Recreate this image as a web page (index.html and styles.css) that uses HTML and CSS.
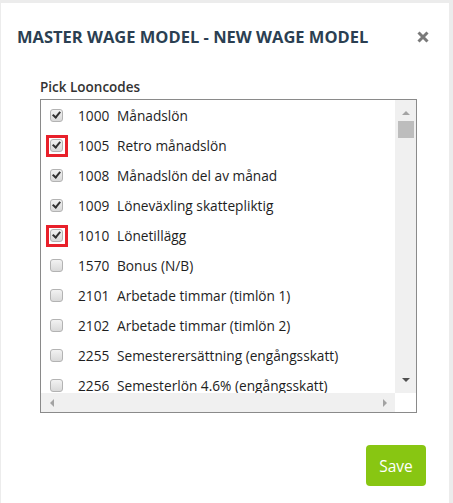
FILE: index.html
```html
<!DOCTYPE html>
<html lang="sv">
<head>
    <meta charset="UTF-8">
    <meta name="viewport" content="width=device-width, initial-scale=1.0">
    <title>Master wage model</title>
    <link rel="stylesheet" href="styles.css">
</head>
<body>
    <div class="modal">
        <div class="modal-header">
            <h1>MASTER WAGE MODEL - NEW WAGE MODEL</h1>
            <span class="close">
                <svg width="12" height="12" viewBox="0 0 12 12"><path d="M1.5 1.5 L10.5 10.5 M10.5 1.5 L1.5 10.5" stroke="#7a7a7a" stroke-width="3"/></svg>
            </span>
        </div>

        <div class="modal-body">
            <div class="field-label">Pick Looncodes</div>
            <div class="listbox">
                <div class="list">
                    <div class="row"><span class="check on"></span><span class="code">1000</span><span class="name">Månadslön</span></div>
                    <div class="row"><span class="mark"><span class="check on"></span></span><span class="code">1005</span><span class="name">Retro månadslön</span></div>
                    <div class="row"><span class="check on"></span><span class="code">1008</span><span class="name">Månadslön del av månad</span></div>
                    <div class="row"><span class="check on"></span><span class="code">1009</span><span class="name">Löneväxling skattepliktig</span></div>
                    <div class="row"><span class="mark"><span class="check on"></span></span><span class="code">1010</span><span class="name">Lönetillägg</span></div>
                    <div class="row"><span class="check"></span><span class="code">1570</span><span class="name">Bonus (N/B)</span></div>
                    <div class="row"><span class="check"></span><span class="code">2101</span><span class="name">Arbetade timmar (timlön 1)</span></div>
                    <div class="row"><span class="check"></span><span class="code">2102</span><span class="name">Arbetade timmar (timlön 2)</span></div>
                    <div class="row"><span class="check"></span><span class="code">2255</span><span class="name">Semesterersättning (engångsskatt)</span></div>
                    <div class="row"><span class="check"></span><span class="code">2256</span><span class="name">Semesterlön 4.6% (engångsskatt)</span></div>
                </div>
                <div class="vbar">
                    <span class="arrow up"></span>
                    <span class="thumb"></span>
                    <span class="spacer"></span>
                    <span class="arrow down"></span>
                </div>
                <div class="hbar">
                    <span class="arrow left"></span>
                    <span class="arrow right"></span>
                </div>
                <div class="corner"></div>
            </div>
        </div>

        <div class="modal-footer">
            <button type="button" class="btn-save">Save</button>
        </div>
    </div>
</body>
</html>
```

FILE: styles.css
```css
body {
    margin: 0;
    height: 503px;
    overflow: hidden;
    background: #ececec;
    font-family: "Open Sans", "Liberation Sans", sans-serif;
}

.modal {
    box-sizing: border-box;
    width: 448px;
    height: 500px;
    margin: 3px 0 0 1px;
    background: #fff;
    display: flex;
    flex-direction: column;
}

.modal-header {
    display: flex;
    align-items: center;
    justify-content: space-between;
    padding: 20px 20px 0 16px;
    height: 26px;
}

h1 {
    margin: 0;
    font-size: 16.5px;
    font-weight: 700;
    color: #2b3f52;
}

.close {
    display: flex;
    margin-top: 2px;
}

.modal-body {
    padding: 29px 0 0 39px;
}

.field-label {
    font-size: 13.5px;
    font-weight: 600;
    color: #333;
    line-height: 18px;
    margin-bottom: 3px;
}

.listbox {
    box-sizing: border-box;
    width: 377px;
    height: 314px;
    border: 1px solid #8a8a8a;
    display: grid;
    grid-template-columns: 1fr 21px;
    grid-template-rows: 1fr 19px;
}

.list {
    overflow: hidden;
    padding-left: 9px;
}

.row {
    display: flex;
    align-items: center;
    height: 30px;
    font-size: 13.7px;
    color: #1e1e1e;
    white-space: nowrap;
}

.check {
    box-sizing: border-box;
    width: 13px;
    height: 13px;
    flex: none;
    border: 1px solid #b3b3b3;
    border-radius: 3px;
    background: linear-gradient(#f2f2f2, #d9d9d9);
    margin-right: 15px;
    position: relative;
}

.check.on::after {
    content: "";
    position: absolute;
    left: 3px;
    top: 0px;
    width: 3px;
    height: 6px;
    border: solid #333;
    border-width: 0 2px 2px 0;
    transform: rotate(40deg);
}

/* red highlight round a checkbox */
.mark {
    display: flex;
    flex: none;
    border: 3px solid #e8202a;
    padding: 1px 2px 2px 1px;
    margin: -4px 10px -5px -4px;
}

.mark .check {
    margin-right: 0;
}

.code {
    width: 39px;
    flex: none;
}

.vbar {
    background: #f0f0f0;
    display: flex;
    flex-direction: column;
    align-items: center;
}

.thumb {
    width: 16px;
    height: 17px;
    background: #bdbdbd;
    margin-top: 6px;
}

.spacer {
    flex: 1;
}

.hbar {
    background: #f0f0f0;
    display: flex;
    align-items: center;
    justify-content: space-between;
    padding: 0 8px 0 9px;
}

.corner {
    background: #fff;
}

.arrow {
    width: 0;
    height: 0;
    border: 4px solid transparent;
}

.arrow.up {
    border-top: 0;
    border-bottom-color: #a3a3a3;
    margin-top: 11px;
}

.arrow.down {
    border-bottom: 0;
    border-top-color: #505050;
    margin-bottom: 11px;
}

.arrow.left {
    border-left: 0;
    border-right-color: #a3a3a3;
}

.arrow.right {
    border-right: 0;
    border-left-color: #a3a3a3;
}

.modal-footer {
    display: flex;
    justify-content: flex-end;
    padding: 32px 23px 0 0;
}

.btn-save {
    width: 60px;
    height: 41px;
    border: none;
    border-radius: 4px;
    background: #88c612;
    color: #fff;
    font-family: "Open Sans", "Liberation Sans", sans-serif;
    font-size: 15.5px;
}
```
